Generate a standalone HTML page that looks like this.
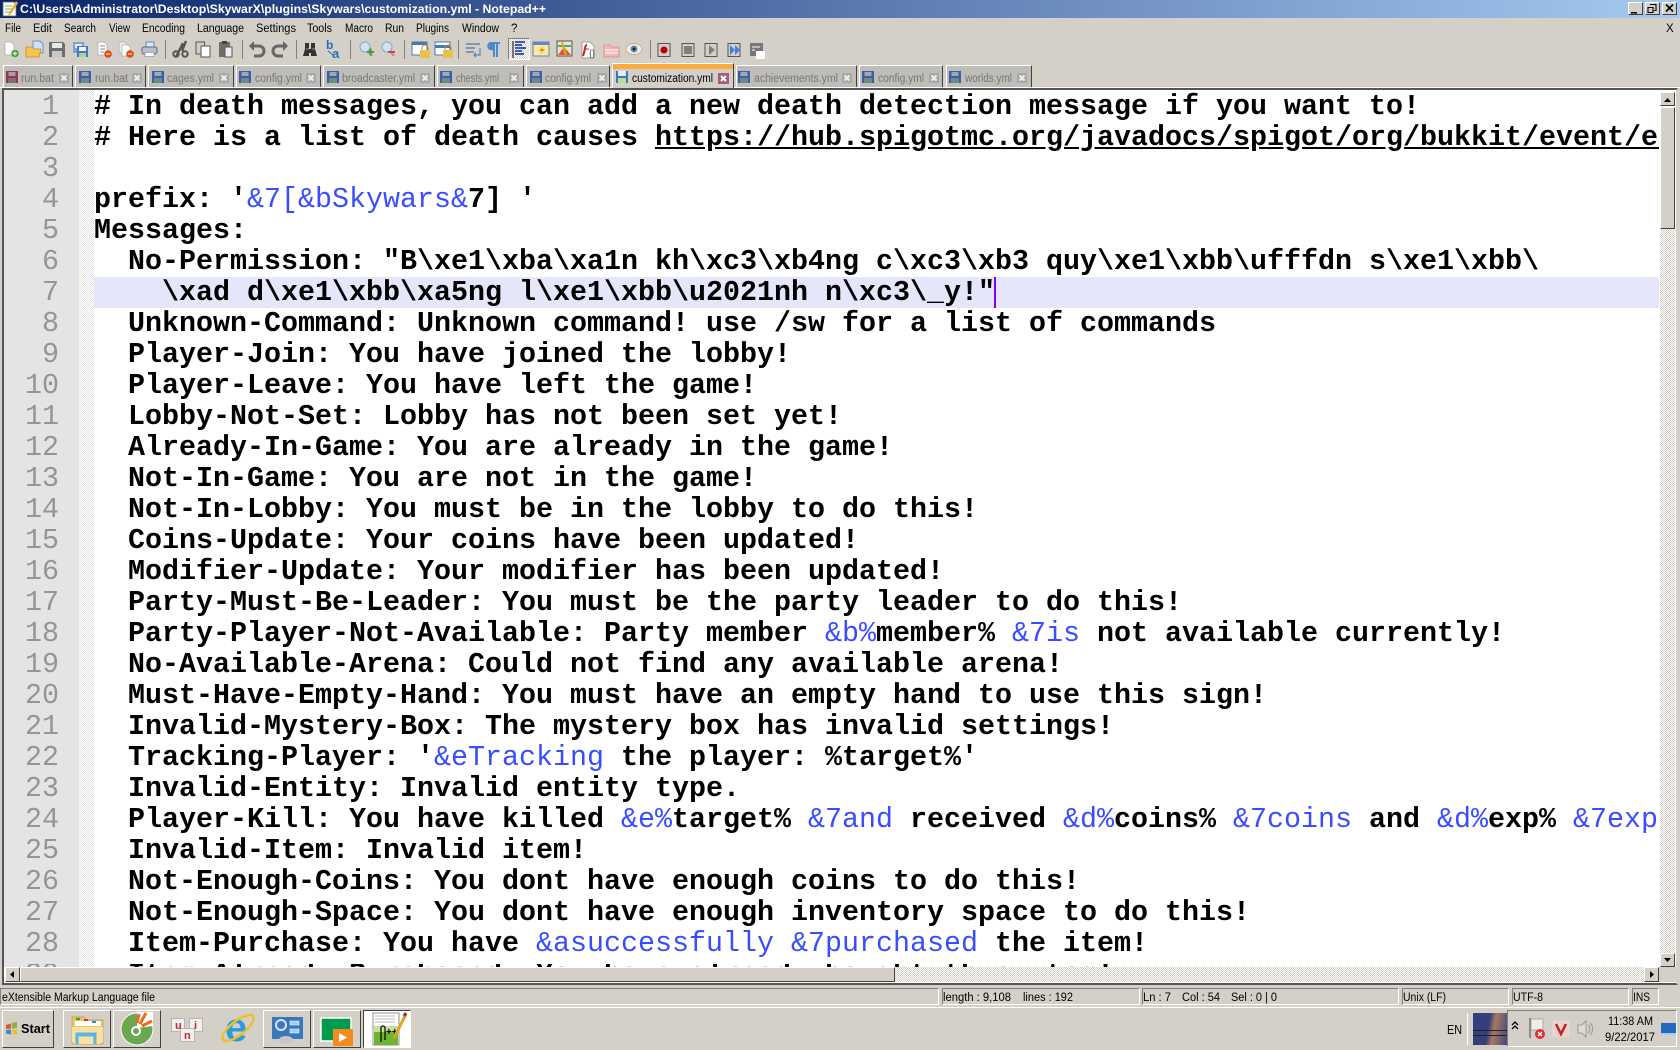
<!DOCTYPE html>
<html><head><meta charset="utf-8"><title>Notepad++</title>
<style>
html,body{margin:0;padding:0;width:1680px;height:1050px;overflow:hidden;background:#d4d0c8}
.a{position:absolute;box-sizing:border-box}
.r{border:1px solid;border-color:#fff #404040 #404040 #fff;background:#d4d0c8}
.s{border:1px solid;border-color:#808080 #fff #fff #808080}
.t{border:1px solid;border-color:#fff #404040 transparent #fff;border-bottom:0;background:#bfbdb8;top:65px;height:22px}
#code{left:94px;top:91px;width:1565px;height:876px;overflow:hidden;font:bold 28.33px/31px "Liberation Mono",monospace;color:#000;white-space:pre}
#code i{font-style:normal;font-weight:normal;color:#3a4cff}
#nums{left:4px;top:91px;width:55px;height:876px;overflow:hidden;font:normal 28.33px/31px "Liberation Mono",monospace;color:#959595;text-align:right;white-space:pre}
svg text{font-family:"Liberation Sans",sans-serif;font-size:11.5px;fill:#000}
svg .g{fill:#777}
</style></head><body>
<div class="a" style="left:0;top:0;width:1680px;height:18px;background:linear-gradient(90deg,#0a246a,#a6caf0)"></div>
<div class="a r" style="left:1628px;top:2px;width:15px;height:13px"></div>
<div class="a r" style="left:1645px;top:2px;width:15px;height:13px"></div>
<div class="a r" style="left:1662px;top:2px;width:15px;height:13px"></div>

<div class="a" style="left:0;top:87px;width:1680px;height:1px;background:#fff"></div>
<div class="t a" style="left:3px;width:70px"></div><div class="t a" style="left:75px;width:71px"></div><div class="t a" style="left:148px;width:86px"></div><div class="t a" style="left:236px;width:85px"></div><div class="t a" style="left:323px;width:112px"></div><div class="t a" style="left:437px;width:87px"></div><div class="t a" style="left:526px;width:84px"></div>
<div class="t a" style="left:736px;width:121px"></div><div class="t a" style="left:859px;width:84px"></div><div class="t a" style="left:946px;width:86px"></div>
<div class="t a" style="left:612px;width:122px;top:63px;height:25px;background:#d4d0c8"></div>
<div class="a" style="left:613px;top:64px;width:120px;height:5px;background:#fbab3d"></div>

<!-- editor -->
<div class="a" style="left:2px;top:88px;width:1676px;height:897px;background:#fff;border:2px solid;border-color:#555 #d4d0c8 #555 #555"></div>
<div class="a" style="left:4px;top:90px;width:75px;height:877px;background:#e4e4e4"></div>
<div class="a" style="left:79px;top:90px;width:15px;height:877px;background:repeating-conic-gradient(#e4e4e4 0 25%,#fff 0 50%) 0 0/2px 2px"></div>
<div class="a" style="left:94px;top:277px;width:1565px;height:31px;background:#e6e6fb"></div>
<div class="a" style="left:994px;top:277px;width:2px;height:31px;background:#8000ff"></div>
<div id="nums" class="a">1
2
3
4
5
6
7
8
9
10
11
12
13
14
15
16
17
18
19
20
21
22
23
24
25
26
27
28
29</div>
<div id="code" class="a"># In death messages, you can add a new death detection message if you want to!
# Here is a list of death causes <u>https://hub.spigotmc.org/javadocs/spigot/org/bukkit/event/entity/EntityDamageEvent.DamageCause.html</u>

prefix: '<i>&amp;7[&amp;bSkywars&amp;</i>7] '
Messages:
  No-Permission: "B\xe1\xba\xa1n kh\xc3\xb4ng c\xc3\xb3 quy\xe1\xbb\ufffdn s\xe1\xbb\
    \xad d\xe1\xbb\xa5ng l\xe1\xbb\u2021nh n\xc3\_y!"
  Unknown-Command: Unknown command! use /sw for a list of commands
  Player-Join: You have joined the lobby!
  Player-Leave: You have left the game!
  Lobby-Not-Set: Lobby has not been set yet!
  Already-In-Game: You are already in the game!
  Not-In-Game: You are not in the game!
  Not-In-Lobby: You must be in the lobby to do this!
  Coins-Update: Your coins have been updated!
  Modifier-Update: Your modifier has been updated!
  Party-Must-Be-Leader: You must be the party leader to do this!
  Party-Player-Not-Available: Party member <i>&amp;b%</i>member% <i>&amp;7is</i> not available currently!
  No-Available-Arena: Could not find any available arena!
  Must-Have-Empty-Hand: You must have an empty hand to use this sign!
  Invalid-Mystery-Box: The mystery box has invalid settings!
  Tracking-Player: '<i>&amp;eTracking</i> the player: %target%'
  Invalid-Entity: Invalid entity type.
  Player-Kill: You have killed <i>&amp;e%</i>target% <i>&amp;7and</i> received <i>&amp;d%</i>coins% <i>&amp;7coins</i> and <i>&amp;d%</i>exp% <i>&amp;7exp</i>
  Invalid-Item: Invalid item!
  Not-Enough-Coins: You dont have enough coins to do this!
  Not-Enough-Space: You dont have enough inventory space to do this!
  Item-Purchase: You have <i>&amp;asuccessfully &amp;7purchased</i> the item!
  Item-Already-Purchased: You have already bought this item!</div>
<div class="a" style="left:94px;top:959px;width:1565px;height:5px;background:#fff"></div>
<div class="a" style="left:4px;top:959px;width:75px;height:5px;background:#e4e4e4"></div>

<!-- scrollbars -->
<div class="a" style="left:1660px;top:229px;width:15px;height:724px;background:repeating-conic-gradient(#d4d0c8 0 25%,#fff 0 50%) 0 0/2px 2px"></div>
<div class="a r" style="left:1660px;top:92px;width:15px;height:14px"></div>
<div class="a r" style="left:1660px;top:107px;width:15px;height:122px"></div>
<div class="a r" style="left:1660px;top:953px;width:15px;height:14px"></div>
<div class="a" style="left:5px;top:967px;width:1654px;height:15px;background:repeating-conic-gradient(#d4d0c8 0 25%,#fff 0 50%) 0 0/2px 2px"></div>
<div class="a r" style="left:5px;top:967px;width:15px;height:15px"></div>
<div class="a r" style="left:20px;top:967px;width:875px;height:15px"></div>
<div class="a r" style="left:1644px;top:967px;width:15px;height:15px"></div>
<div class="a" style="left:1659px;top:967px;width:17px;height:15px;background:#d4d0c8"></div>

<!-- status -->
<div class="a s" style="left:0;top:988px;width:939px;height:17px"></div>
<div class="a s" style="left:942px;top:988px;width:198px;height:17px"></div>
<div class="a s" style="left:1142px;top:988px;width:257px;height:17px"></div>
<div class="a s" style="left:1402px;top:988px;width:107px;height:17px"></div>
<div class="a s" style="left:1512px;top:988px;width:117px;height:17px"></div>
<div class="a s" style="left:1632px;top:988px;width:27px;height:17px"></div>
<div class="a" style="left:0;top:1007px;width:1680px;height:1px;background:#fff"></div>

<!-- taskbar -->
<div class="a r" style="left:2px;top:1010px;width:52px;height:38px"></div>
<div class="a r" style="left:63px;top:1010px;width:48px;height:38px"></div>
<div class="a r" style="left:113px;top:1010px;width:48px;height:38px"></div>
<div class="a r" style="left:263px;top:1010px;width:48px;height:38px"></div>
<div class="a r" style="left:313px;top:1010px;width:48px;height:38px"></div>
<div class="a" style="left:363px;top:1010px;width:48px;height:38px;background:#fff;border:1px solid;border-color:#404040 #fff #fff #404040"></div>
<div class="a" style="left:1507px;top:1010px;width:170px;height:37px;border:1px solid;border-color:#808080 #fff #fff #808080"></div>
<div class="a" style="left:1467px;top:1013px;width:1px;height:32px;background:#fff"></div>
<div class="a" style="left:1473px;top:1013px;width:34px;height:32px;background:linear-gradient(100deg,#35407a 0 45%,#a97a62 60%,#40447e 100%)"></div>
<div class="a" style="left:1473px;top:1030px;width:34px;height:1px;background:#222"></div>
<div class="a" style="left:1473px;top:1035px;width:34px;height:1px;background:#222"></div>
<div class="a" style="left:508px;top:38px;width:22px;height:22px;background:repeating-conic-gradient(#d4d0c8 0 25%,#fff 0 50%) 0 0/2px 2px;border:1px solid;border-color:#808080 #fff #fff #808080"></div>

<svg class="a" style="left:0;top:0;pointer-events:none" width="1680" height="1050" viewBox="0 0 1680 1050" xmlns="http://www.w3.org/2000/svg">
<defs>
<symbol id="fl" viewBox="0 0 12 12"><rect width="12" height="12" fill="#3d5fa8"/><rect x="2.500" y="1" width="7" height="4" fill="#a0a8b8"/><rect x="2" y="7" width="8" height="5" fill="#6f8a86"/></symbol>
<symbol id="flr" viewBox="0 0 12 12"><rect width="12" height="12" fill="#8a3a58"/><rect x="2.500" y="1" width="7" height="4" fill="#b09aa4"/><rect x="2" y="7" width="8" height="5" fill="#8a6a74"/></symbol>
<symbol id="xb" viewBox="0 0 10 10"><rect width="10" height="10" fill="#a8a8a8"/><path d="M2.500 2.500l5 5M7.500 2.500l-5 5" stroke="#eee" stroke-width="2"/></symbol>
</defs>
<!-- title -->
<path d="M3 2h11l2 2v12H3z" fill="#fff" stroke="#666" stroke-width=".7"/><path d="M5 6h7M5 9h7M5 12h5" stroke="#7a7"/><path d="M16 1L9 13l-1 3 3-2 7-11z" fill="#e8b020"/>
<text x="20" y="13" textLength="526" lengthAdjust="spacingAndGlyphs" style="fill:#fff;font-weight:bold;font-size:12px">C:\Users\Administrator\Desktop\SkywarX\plugins\Skywars\customization.yml - Notepad++</text>
<path d="M1631 12h6v1.600h-6z" fill="#000"/>
<path d="M1650 4.500h6v6h-2M1648 7.500h5v5h-5z" fill="none" stroke="#000" stroke-width="1.100"/>
<path d="M1666 4.500l7 7M1673 4.500l-7 7" stroke="#000" stroke-width="1.600"/>
<!-- menu -->
<g>
<text x="5" y="32" textLength="16" lengthAdjust="spacingAndGlyphs">File</text>
<text x="33" y="32" textLength="19" lengthAdjust="spacingAndGlyphs">Edit</text>
<text x="64" y="32" textLength="32" lengthAdjust="spacingAndGlyphs">Search</text>
<text x="109" y="32" textLength="21" lengthAdjust="spacingAndGlyphs">View</text>
<text x="142" y="32" textLength="43" lengthAdjust="spacingAndGlyphs">Encoding</text>
<text x="197" y="32" textLength="47" lengthAdjust="spacingAndGlyphs">Language</text>
<text x="256" y="32" textLength="40" lengthAdjust="spacingAndGlyphs">Settings</text>
<text x="307" y="32" textLength="25" lengthAdjust="spacingAndGlyphs">Tools</text>
<text x="345" y="32" textLength="28" lengthAdjust="spacingAndGlyphs">Macro</text>
<text x="385" y="32" textLength="19" lengthAdjust="spacingAndGlyphs">Run</text>
<text x="416" y="32" textLength="33" lengthAdjust="spacingAndGlyphs">Plugins</text>
<text x="462" y="32" textLength="37" lengthAdjust="spacingAndGlyphs">Window</text>
<text x="511" y="32">?</text>
<text x="1666" y="32">X</text>
</g>
<!-- toolbar separators -->
<g fill="#808080"><rect x="165" y="40" width="1" height="19"/><rect x="242" y="40" width="1" height="19"/><rect x="296" y="40" width="1" height="19"/><rect x="350" y="40" width="1" height="19"/><rect x="404" y="40" width="1" height="19"/><rect x="458" y="40" width="1" height="19"/><rect x="650" y="40" width="1" height="19"/></g>
<!-- toolbar icons -->
<g>
<path d="M5 42h6l3 3v10H5z" fill="#fff" stroke="#aaa" stroke-width=".7"/><circle cx="15" cy="53.500" r="3.800" fill="#49a43c"/><path d="M13 53.500h4M15 51.500v4" stroke="#fff"/>
<path d="M33 41h7l3 3v9H33z" fill="#cfe0f5" stroke="#6a90c8"/><path d="M26 47h6l2 2h7l-2 8H26z" fill="#f3c44e" stroke="#c0902a" stroke-width=".8"/>
<path d="M49 42h14l2 2v13H49z" fill="#6e6e6e"/><rect x="52" y="43" width="10" height="5" fill="#e8e8e8"/><rect x="52" y="51" width="10" height="6" fill="#c8c8c8"/>
<g><rect x="73" y="42" width="11" height="11" fill="#7aa4d8"/><rect x="75" y="44" width="7" height="4" fill="#e6eef8"/><rect x="77" y="46" width="11" height="11" fill="#3f78c8"/><rect x="79" y="47" width="7" height="4" fill="#eef4fb"/><rect x="79" y="53" width="7" height="4" fill="#a8d49a"/></g>
<path d="M98 42h6l3 3v10H98z" fill="#fff" stroke="#aaa" stroke-width=".7"/><path d="M100 46h5M100 49h5M100 52h4" stroke="#888"/><circle cx="108" cy="54" r="3.800" fill="#e24a10"/><path d="M106 54h4" stroke="#fff"/>
<path d="M119 42h6l3 3v8h-9z" fill="#eee" stroke="#aaa" stroke-width=".7"/><path d="M122 45h6l2 2v9h-8z" fill="#fff" stroke="#aaa" stroke-width=".7"/><circle cx="130" cy="54" r="3.800" fill="#e24a10"/><path d="M128 54h4" stroke="#fff"/>
<path d="M146 42h8v6h-8z" fill="#d8e6f6" stroke="#5a8ac8"/><rect x="142" y="47" width="15" height="7" rx="2" fill="#b9c0c8" stroke="#667"/><rect x="145" y="52.500" width="9" height="4" fill="#fff" stroke="#89a" stroke-width=".7"/>
<path d="M176 57l7-14M186 41l-4 10" stroke="#555" stroke-width="2.400"/><circle cx="176" cy="54" r="2.700" fill="none" stroke="#555" stroke-width="2"/><circle cx="185" cy="54" r="2.700" fill="none" stroke="#555" stroke-width="2"/>
<rect x="196" y="42" width="8.500" height="12" fill="#d4d0c8" stroke="#555"/><rect x="201" y="46" width="9" height="11" fill="#fff" stroke="#555"/>
<rect x="219" y="42" width="11" height="15" fill="#6e6e6e"/><rect x="222" y="41" width="5" height="3" fill="#444"/><path d="M225 47h7v10h-7z" fill="#eee" stroke="#555"/>
<path d="M251 46h8a5 5 0 0 1 0 10h-5" fill="none" stroke="#666" stroke-width="3"/><path d="M254 41l-5 5 5 5z" fill="#666"/>
<path d="M286 46h-8a5 5 0 0 0 0 10h5" fill="none" stroke="#666" stroke-width="3"/><path d="M283 41l5 5-5 5z" fill="#666"/>
<path d="M305 43h4v6h2v-6h4v6l2 7h-6v-3h-2v3h-6l2-7z" fill="#333"/><path d="M306 49h3M312 49h3" stroke="#999"/>
<text x="326" y="49" style="fill:#1e6fc0;font-weight:bold;font-size:12px">b</text><text x="332" y="58" style="fill:#1e6fc0;font-weight:bold;font-size:13px">a</text><path d="M328 51l5 4" stroke="#1e6fc0"/>
<circle cx="365" cy="47" r="5" fill="#cfe3f5" stroke="#8ab"/><path d="M368 51l4 5" stroke="#b88" stroke-width="2"/><path d="M367 52h7M370.500 48.500v7" stroke="#3f9f30" stroke-width="2"/>
<circle cx="387" cy="47" r="5" fill="#cfe3f5" stroke="#8ab"/><path d="M390 51l4 5" stroke="#b88" stroke-width="2"/><path d="M388 52h7" stroke="#d8404a" stroke-width="2"/>
<rect x="412" y="42" width="15" height="13" fill="#fff" stroke="#4a78b0"/><rect x="412" y="42" width="15" height="3" fill="#4a78b0"/><rect x="420" y="50" width="10" height="8" fill="#e9c04c"/><path d="M422 50v-2a3 3 0 0 1 6 0v2" fill="none" stroke="#b98f2a"/>
<rect x="435" y="42" width="15" height="13" fill="#fff" stroke="#4a78b0"/><rect x="435" y="45" width="15" height="3" fill="#4a78b0"/><rect x="443" y="50" width="10" height="8" fill="#e9c04c"/><path d="M445 50v-2a3 3 0 0 1 6 0v2" fill="none" stroke="#b98f2a"/>
<path d="M466 44h14M466 48h9M466 52h8" stroke="#2a5aa8"/><path d="M480 48v7h-6M476 53l-2 2 2 2" fill="none" stroke="#3a7ac8"/>
<path d="M490 42h10v2h-2v13h-2V44h-1v13h-2v-7a4 4 0 0 1-3-8z" fill="#4a8ad0"/>
<path d="M513 41v17" stroke="#000"/><path d="M515 42h10M515 45h7M515 48h11M515 51h7M515 54h9" stroke="#0a2ab0" stroke-width="1.500"/>
<rect x="533" y="42" width="16" height="14" fill="#fbe9a0" stroke="#5a8ac0"/><rect x="533" y="42" width="16" height="3" fill="#5a8ac0"/><path d="M543 46l-4 5h3l-2 4 5-6h-3z" fill="#e89010"/>
<rect x="557" y="41" width="15" height="15" fill="#e8e6d0" stroke="#555"/><path d="M558 55l6-8 7 8z" fill="#d54"/><path d="M558 46h13" stroke="#4a8" stroke-width="2"/><path d="M562 42l4 13" stroke="#ea0" stroke-width="2"/>
<path d="M582 42h8l4 4v12h-12z" fill="#fff" stroke="#888" stroke-width=".7"/><path d="M587 45c-2 0-2 4-3 8l-1 3" fill="none" stroke="#c22" stroke-width="2"/><path d="M584 49h5" stroke="#c22"/><text x="589" y="56" style="font-size:9px;fill:#555">{}</text>
<path d="M604 45h6l1 2h8v10h-15z" fill="#f3b8b4" stroke="#d88" stroke-width=".8"/><path d="M605 50h13M605 53h13" stroke="#fff"/>
<ellipse cx="634" cy="49" rx="8" ry="5.500" fill="#f4f0e4" stroke="#d8a878"/><circle cx="634" cy="49" r="3.500" fill="#5a8ec0"/><circle cx="634" cy="49" r="1.500" fill="#123"/>
<g fill="#d4d0c8" stroke="#555"><rect x="658" y="43.500" width="12" height="13"/><rect x="682" y="43.500" width="12" height="13"/><rect x="705" y="43.500" width="12" height="13"/><rect x="728" y="43.500" width="12" height="13"/></g>
<circle cx="664" cy="50" r="3.500" fill="#c00000"/><rect x="684" y="46" width="8" height="8" fill="#808080"/><path d="M709 45v10l6-5z" fill="#808080"/><path d="M730 45v10l5-5zM735 45v10l5-5z" fill="#3b82e0"/>
<rect x="750" y="43" width="13" height="13" fill="#777"/><rect x="756" y="51" width="9" height="8" fill="#fff"/><path d="M752 47h8M752 50h3M757 53h5" stroke="#fff"/>
</g>
<!-- tabs -->
<g>
<use href="#flr" x="6" y="71" width="12" height="12"/>
<use href="#fl" x="79" y="71" width="12" height="12"/><use href="#fl" x="152" y="71" width="12" height="12"/><use href="#fl" x="239" y="71" width="12" height="12"/><use href="#fl" x="327" y="71" width="12" height="12"/><use href="#fl" x="440" y="71" width="12" height="12"/><use href="#fl" x="530" y="71" width="12" height="12"/><use href="#fl" x="738" y="71" width="12" height="12"/><use href="#fl" x="862" y="71" width="12" height="12"/><use href="#fl" x="949" y="71" width="12" height="12"/>
<rect x="616" y="71" width="12" height="12" fill="#3d78c8"/><rect x="618" y="71" width="8" height="5" fill="#e4eefa"/><rect x="618" y="78" width="8" height="5" fill="#b8e08a"/>
<use href="#xb" x="59" y="73" width="10" height="10"/><use href="#xb" x="132" y="73" width="10" height="10"/><use href="#xb" x="219" y="73" width="10" height="10"/><use href="#xb" x="306" y="73" width="10" height="10"/><use href="#xb" x="420" y="73" width="10" height="10"/><use href="#xb" x="509" y="73" width="10" height="10"/><use href="#xb" x="597" y="73" width="10" height="10"/><use href="#xb" x="842" y="73" width="10" height="10"/><use href="#xb" x="929" y="73" width="10" height="10"/><use href="#xb" x="1017" y="73" width="10" height="10"/>
<rect x="718" y="73" width="11" height="11" fill="#a85a80"/><path d="M721 76l5 5M726 76l-5 5" stroke="#fff" stroke-width="2"/>
<text class="g" x="21" y="82" textLength="33" lengthAdjust="spacingAndGlyphs">run.bat</text>
<text class="g" x="95" y="82" textLength="33" lengthAdjust="spacingAndGlyphs">run.bat</text>
<text class="g" x="167" y="82" textLength="47" lengthAdjust="spacingAndGlyphs">cages.yml</text>
<text class="g" x="255" y="82" textLength="47" lengthAdjust="spacingAndGlyphs">config.yml</text>
<text class="g" x="342" y="82" textLength="73" lengthAdjust="spacingAndGlyphs">broadcaster.yml</text>
<text class="g" x="456" y="82" textLength="43" lengthAdjust="spacingAndGlyphs">chests.yml</text>
<text class="g" x="545" y="82" textLength="46" lengthAdjust="spacingAndGlyphs">config.yml</text>
<text x="632" y="82" textLength="81" lengthAdjust="spacingAndGlyphs">customization.yml</text>
<text class="g" x="754" y="82" textLength="84" lengthAdjust="spacingAndGlyphs">achievements.yml</text>
<text class="g" x="878" y="82" textLength="46" lengthAdjust="spacingAndGlyphs">config.yml</text>
<text class="g" x="965" y="82" textLength="47" lengthAdjust="spacingAndGlyphs">worlds.yml</text>
</g>
<!-- scroll arrows -->
<path d="M1664 102h7l-3.500-4zM1664 958h7l-3.500 4zM14 971v7l-4-3.500zM1650 971v7l4-3.500z" fill="#000"/>
<!-- status text -->
<g>
<text x="2" y="1001" textLength="153" lengthAdjust="spacingAndGlyphs">eXtensible Markup Language file</text>
<text x="943" y="1001" textLength="68" lengthAdjust="spacingAndGlyphs">length : 9,108</text>
<text x="1023" y="1001" textLength="50" lengthAdjust="spacingAndGlyphs">lines : 192</text>
<text x="1143" y="1001" textLength="28" lengthAdjust="spacingAndGlyphs">Ln : 7</text>
<text x="1182" y="1001" textLength="38" lengthAdjust="spacingAndGlyphs">Col : 54</text>
<text x="1231" y="1001" textLength="46" lengthAdjust="spacingAndGlyphs">Sel : 0 | 0</text>
<text x="1403" y="1001" textLength="43" lengthAdjust="spacingAndGlyphs">Unix (LF)</text>
<text x="1513" y="1001" textLength="30" lengthAdjust="spacingAndGlyphs">UTF-8</text>
<text x="1633" y="1001" textLength="17" lengthAdjust="spacingAndGlyphs">INS</text>
</g>
<!-- taskbar content -->
<path d="M6 1025l5-1.500v5l-5 .5z" fill="#e0562a"/><path d="M12 1023l5-1v6l-5 .5z" fill="#7ab648"/><path d="M6 1030l5-.5v5l-5-1z" fill="#3a8ad8"/><path d="M12 1029.500l5-.5v6l-5-1z" fill="#f0c030"/>
<text x="21" y="1033" textLength="29" lengthAdjust="spacingAndGlyphs" style="font-weight:bold;font-size:13px">Start</text>
<!-- explorer -->
<path d="M72 1017h12l2 3h17v24H72z" fill="#e9c766" stroke="#b8974a" stroke-width=".7"/><rect x="75" y="1021" width="26" height="5" fill="#fff"/><rect x="76" y="1018" width="4" height="2" fill="#2a2"/><rect x="84" y="1019" width="4" height="2" fill="#d33"/><rect x="92" y="1021" width="4" height="2" fill="#38c"/><path d="M72 1027h31v15l-3 2H74l-2-2z" fill="#f9e2a0"/><path d="M77 1044v-10h18v10M77 1035h17" fill="none" stroke="#5ab4e8" stroke-width="3"/>
<!-- coccoc -->
<circle cx="137" cy="1029" r="16" fill="#6aa84f"/><circle cx="137" cy="1029" r="16" fill="none" stroke="#fff" stroke-width="1"/><circle cx="136" cy="1031" r="5" fill="#fff"/><circle cx="136" cy="1031" r="3" fill="#6aa84f"/><path d="M137 1012l16 0 0 14-16 2z" fill="#fff"/><path d="M139 1014l-2 9M146 1013l-6 11M152 1021l-10 5" stroke="#ea6a20" stroke-width="3"/>
<!-- uni -->
<g stroke="#aaa" stroke-width=".8" fill="#f0f0f0"><rect x="171.500" y="1018.500" width="13" height="13"/><rect x="189.500" y="1018.500" width="13" height="13"/><rect x="180.500" y="1028.500" width="14" height="13"/></g>
<text x="175" y="1029" style="fill:#d02030;font-weight:bold;font-size:11px">u</text><text x="194" y="1029" style="fill:#d02030;font-weight:bold;font-size:11px">i</text><text x="184" y="1039" style="fill:#d02030;font-weight:bold;font-size:11px">n</text>
<!-- IE -->
<text x="225" y="1041" style="fill:#2a9ad8;font-weight:bold;font-size:40px;font-family:'Liberation Sans'">e</text><ellipse cx="238" cy="1028" rx="19" ry="7" fill="none" stroke="#eec030" stroke-width="2.500" transform="rotate(-38 238 1028)"/>
<!-- control panel -->
<rect x="272" y="1017" width="31" height="22" fill="#3b78b8"/><circle cx="281" cy="1025" r="5" fill="none" stroke="#ddf" stroke-width="2"/><rect x="290" y="1021" width="9" height="4" fill="#9cf" stroke="#fff" stroke-width=".5"/><rect x="290" y="1029" width="9" height="4" fill="#9cf" stroke="#fff" stroke-width=".5"/><ellipse cx="286" cy="1040" rx="7" ry="4" fill="#c4c8cc"/>
<!-- media -->
<rect x="321" y="1018" width="30" height="23" fill="#009a4e" stroke="#fff" stroke-width="1.500"/><rect x="333" y="1029" width="20" height="17" fill="#f58a1f"/><path d="M339 1033v9l8-4.500z" fill="#fff"/>
<!-- notepad -->
<rect x="373" y="1013" width="26" height="32" fill="#fff" stroke="#777" stroke-width=".8"/><path d="M375 1016h20M375 1019h20M375 1022h20" stroke="#bbb"/><rect x="374" y="1030" width="24" height="15" fill="#6eb52f"/><rect x="374" y="1026" width="24" height="6" fill="#c5e29a"/><path d="M381 1042v-14a2 2 0 0 1 4 0v12" fill="none" stroke="#000" stroke-width="1.200"/><text x="386" y="1035" style="font-weight:bold;font-size:10px">++</text><path d="M406 1014l-12 24" stroke="#e2a520" stroke-width="3"/><path d="M406 1013l-2 3" stroke="#a03030" stroke-width="3"/>
<!-- tray -->
<text x="1447" y="1034" textLength="15" lengthAdjust="spacingAndGlyphs" style="font-size:13px">EN</text>
<path d="M1512 1025l3-3 3 3M1512 1029l3-3 3 3" fill="none" stroke="#000" stroke-width="1.300"/>
<path d="M1530 1018v20" stroke="#777" stroke-width="1.500"/><path d="M1531 1019h12v11h-12z" fill="#eee" stroke="#999" stroke-width=".7"/><circle cx="1540" cy="1034" r="5" fill="#d83030"/><path d="M1538 1032l4 4M1542 1032l-4 4" stroke="#fff" stroke-width="1.400"/>
<rect x="1553" y="1021" width="16" height="16" fill="#f3d0d0" stroke="#ddd"/><path d="M1556 1024l5 10 5-10" fill="none" stroke="#c02020" stroke-width="2.500"/>
<path d="M1578 1025h4l4-4v16l-4-4h-4z" fill="#ddd" stroke="#888" stroke-width=".8"/><path d="M1588 1025a5 5 0 0 1 0 8M1590 1023a8 8 0 0 1 0 12" fill="none" stroke="#999"/>
<text x="1608" y="1025" textLength="45" lengthAdjust="spacingAndGlyphs" style="font-size:12px">11:38 AM</text>
<text x="1605" y="1041" textLength="50" lengthAdjust="spacingAndGlyphs" style="font-size:12px">9/22/2017</text>
<rect x="1661" y="1023" width="15" height="12" fill="#1f6bbf"/><rect x="1661" y="1033" width="15" height="2" fill="#aacbe8"/>
</svg>
</body></html>
